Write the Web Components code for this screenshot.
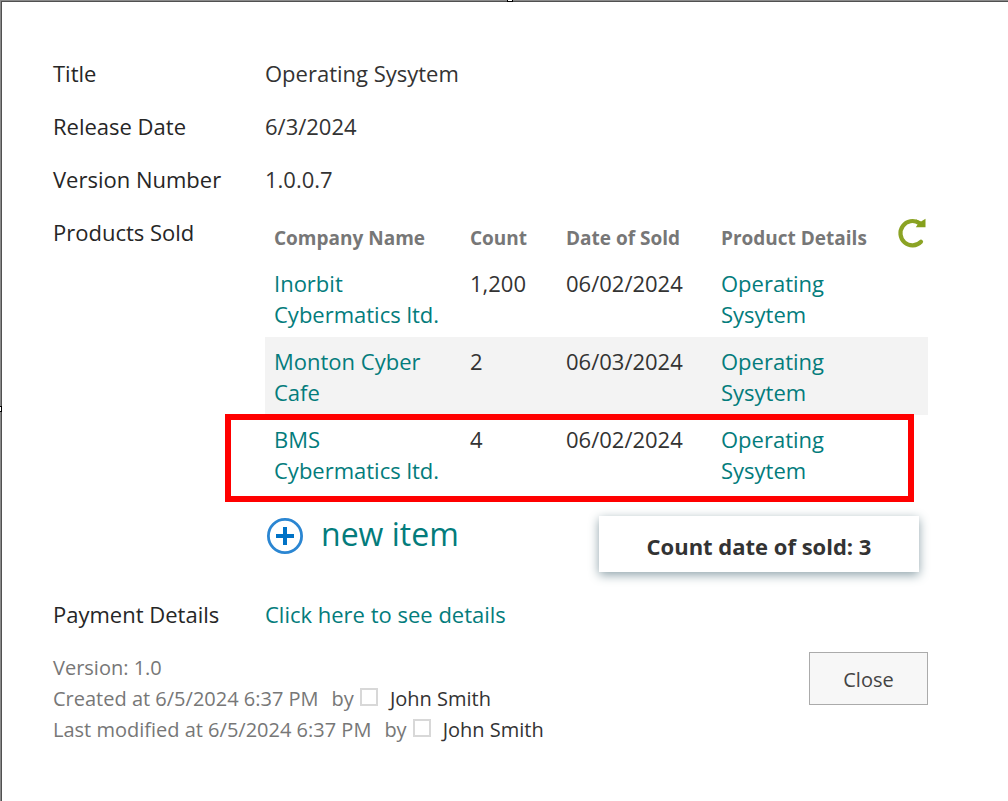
<!DOCTYPE html>
<html lang="en">
<head>
<meta charset="utf-8">
<title>Operating Sysytem</title>
<style>
  body { margin: 0; background: #fff; color: #333; font: 22px/31px "Open Sans", "Noto Sans", sans-serif; }
</style>
</head>
<body>
<item-dialog>
  <form-field label="Title">Operating Sysytem</form-field>
  <form-field label="Release Date">6/3/2024</form-field>
  <form-field label="Version Number">1.0.0.7</form-field>
  <form-field label="Products Sold"><products-sold></products-sold></form-field>
  <form-field label="Payment Details"><text-link>Click here to see details</text-link></form-field>
  <item-footer>
    <span>Version: 1.0</span>
    <author-line name="John Smith">Created at 6/5/2024 6:37 PM</author-line>
    <author-line name="John Smith">Last modified at 6/5/2024 6:37 PM</author-line>
    <close-button slot="action">Close</close-button>
  </item-footer>
</item-dialog>

<script>
const define = (name, html, setup) => {
  const template = document.createElement('template');
  template.innerHTML = html;
  customElements.define(name, class extends HTMLElement {
    constructor() {
      super();
      this.attachShadow({ mode: 'open' }).append(template.content.cloneNode(true));
    }
    connectedCallback() {
      if (setup) setup(this, this.shadowRoot);
    }
  });
};

define('item-dialog', `
  <style>
    :host { display: flex; flex-direction: column; gap: 22px; position: relative; box-sizing: border-box;
      min-height: 100vh; padding: 57px 80px 40px 52px; background: #fff;
      border-left: 1px solid #8a8a8a; border-top: 1px solid #8a8a8a; box-shadow: inset 1px 1px #505050; }
    .grip { position: absolute; box-sizing: border-box; background: #fff; border: 1px solid #000; }
    .top { top: -1px; left: 50%; margin-left: 2px; width: 6px; height: 2px; border-width: 0 1px 1px; }
    .left { left: -1px; top: 50%; margin-top: 5px; width: 2px; height: 6px; border-width: 1px 1px 1px 0; }
  </style>
  <slot></slot>
  <div class="grip top"></div>
  <div class="grip left"></div>
`);

define('form-field', `
  <style>
    :host { display: grid; grid-template-columns: 212px minmax(0, 1fr); }
    .label { color: #262626; }
  </style>
  <div class="label" id="label"></div>
  <div role="group" aria-labelledby="label"><slot></slot></div>
`, (host, root) => { root.querySelector('.label').textContent = host.getAttribute('label'); });

define('text-link', `
  <style>
    :host { display: inline; }
    a { color: #037c7c; text-decoration: none; }
  </style>
  <a href="#"><slot></slot></a>
`);

define('refresh-icon', `
  <style>:host { display: block; width: 30px; height: 30px; } svg { display: block; }</style>
  <svg viewBox="0 0 30 30" width="30" height="30" aria-hidden="true">
    <path d="M24 23.8A12 12.2 0 1 1 22 5" fill="none" stroke="#8ba324" stroke-width="4.2" stroke-linecap="round"/>
    <path d="M19 1.5 24 3.5 28.5.8V9.3H18.8L21 6Z" fill="#86a01c"/>
  </svg>
`);

define('products-sold', `
  <style>
    :host { display: block; }
    .list { position: relative; margin-bottom: 23px; }
    table { width: 100%; table-layout: fixed; border-collapse: collapse; }
    .company { width: 196px; } .count { width: 96px; } .date { width: 155px; } .tools { width: 31px; }
    th, td { text-align: left; vertical-align: top; }
    th { padding: 0 0 5px 9px; font-size: 19px; line-height: 31px; font-weight: 700; color: #777; white-space: nowrap; vertical-align: bottom; }
    th:last-child { padding: 1px 0 11px; }
    td { padding: 9px 9px 7px; line-height: 31px; }
    tbody tr:nth-child(even) { background: #f3f3f3; }
    button { display: block; padding: 0; border: 0; background: none; }
    .highlight { position: absolute; left: -40px; right: 14px; bottom: -9px; height: 88px; box-sizing: border-box; border: 6px solid #f00; pointer-events: none; }
    .below { display: flex; justify-content: space-between; align-items: flex-start; padding-right: 9px; margin-bottom: 5px; }
  </style>
  <div class="list">
    <table>
      <colgroup><col class="company"><col class="count"><col class="date"><col><col class="tools"></colgroup>
      <thead><tr><th>Company Name</th><th>Count</th><th>Date of Sold</th><th>Product Details</th>
        <th><button type="button" aria-label="Refresh"><refresh-icon></refresh-icon></button></th></tr></thead>
      <tbody>
        <tr><td><text-link>Inorbit Cybermatics ltd.</text-link></td><td>1,200</td><td>06/02/2024</td><td><text-link>Operating Sysytem</text-link></td><td></td></tr>
        <tr><td><text-link>Monton Cyber Cafe</text-link></td><td>2</td><td>06/03/2024</td><td><text-link>Operating Sysytem</text-link></td><td></td></tr>
        <tr><td><text-link>BMS Cybermatics ltd.</text-link></td><td>4</td><td>06/02/2024</td><td><text-link>Operating Sysytem</text-link></td><td></td></tr>
      </tbody>
    </table>
    <div class="highlight"></div>
  </div>
  <div class="below"><new-item>new item</new-item><count-card>Count date of sold: 3</count-card></div>
`);

define('new-item', `
  <style>
    :host { display: block; }
    a { display: flex; align-items: flex-start; gap: 18px; color: #037c7c; text-decoration: none; font-size: 32px; line-height: 36px; }
    svg { display: block; margin-top: 1px; }
  </style>
  <a href="#">
    <svg viewBox="0 0 38 38" width="38" height="38" aria-hidden="true">
      <circle cx="20" cy="19" r="16.6" fill="#fff" stroke="#2b86d2" stroke-width="2.8"/>
      <path d="M20 10v18M11 19h18" stroke="#0072c6" stroke-width="4" fill="none"/>
    </svg>
    <span><slot></slot></span>
  </a>
`);

define('count-card', `
  <style>
    :host { display: block; box-sizing: border-box; width: 320px; padding: 15px 8px 10px; text-align: center; white-space: nowrap;
      font-weight: 700; background: #fff; box-shadow: 0 3px 10px #8fa3aa; }
  </style>
  <slot></slot>
`);

define('item-footer', `
  <style>
    :host { display: flex; justify-content: space-between; align-items: flex-start; color: #777; font-size: 20px; }
    .info { display: flex; flex-direction: column; }
  </style>
  <div class="info"><slot></slot></div>
  <slot name="action"></slot>
`);

define('author-line', `
  <style>
    :host { display: flex; align-items: center; }
    .by { margin: 0 6px 0 13px; }
    input { appearance: none; box-sizing: border-box; width: 18px; height: 18px; margin: 0 12px 3px 0; border: 2px solid #d8d8d8; background: #fff; }
    label { color: #333; }
  </style>
  <span><slot></slot></span><span class="by">by</span>
  <input type="checkbox" id="presence"><label for="presence"></label>
`, (host, root) => { root.querySelector('label').textContent = host.getAttribute('name'); });

define('close-button', `
  <style>
    :host { display: block; }
    button { display: block; min-width: 119px; height: 53px; padding: 2px 16px 0; border: 1px solid #ababab; background: #f7f7f7; color: #444; font: inherit; line-height: 31px; }
  </style>
  <button type="button"><slot></slot></button>
`);
</script>
</body>
</html>
